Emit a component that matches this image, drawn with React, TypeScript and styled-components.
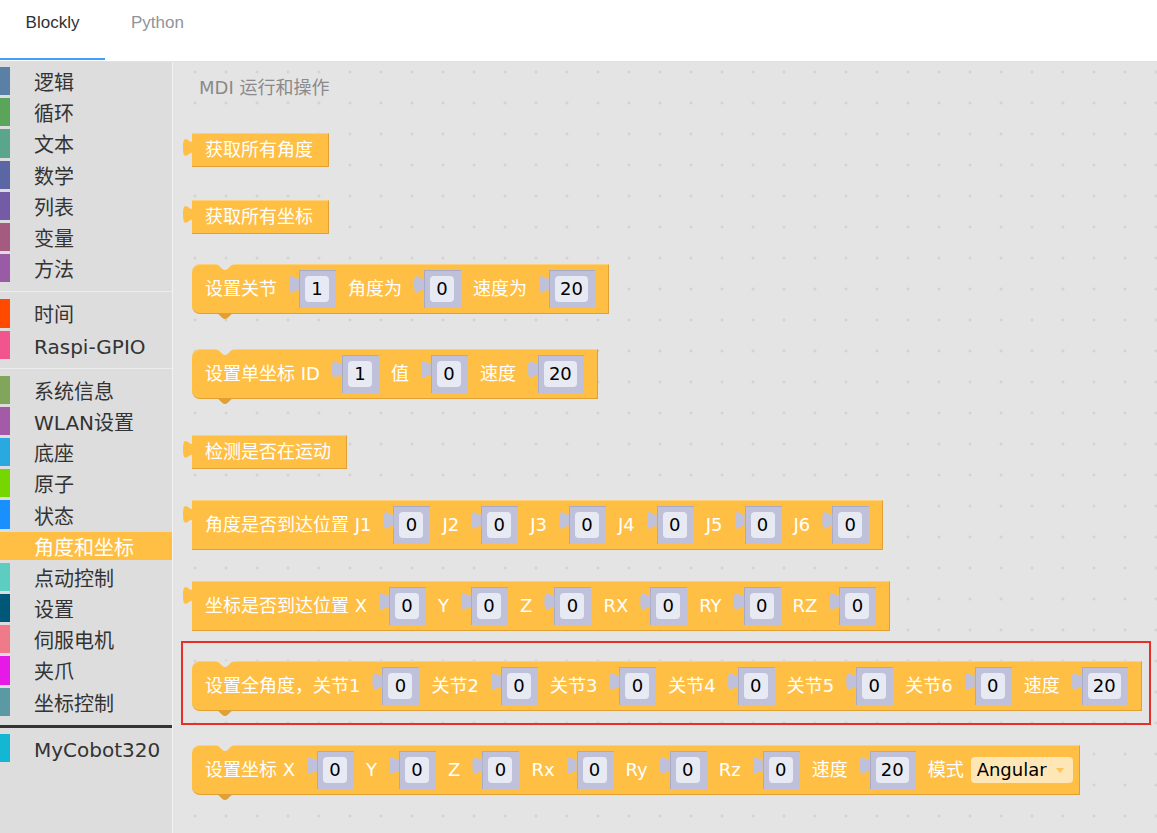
import React from "react";
import styled, { createGlobalStyle } from "styled-components";

const UI = `"DejaVu Sans", "Noto Sans CJK SC", sans-serif`;
const BLOCK = "#FFBF44";
const BLOCK_DARK = "#E0A034";
const BLOCK_LIGHT = "#FFD07A";
const SOCKET = "#BEC1D9";
const FIELD = "#E8EAF3";
const WS_BG = "#E4E4E4";

// puzzle tab (output / input connector), scaled blockly shape
const TAB = "path('M10,0 C10,12.5 0,-10 0,9.4 C0,28.75 10,6.25 10,18.75 Z')";
// statement notch / next tab
const NOTCH = "path('M0,0 C5,0 6,6 10,6 C14,6 15,0 20,0 Z')";

type Part = { t: "text" | "in" | "dd"; v: string };
const T = (v: string): Part => ({ t: "text", v });
const I = (v: string): Part => ({ t: "in", v });
const D = (v: string): Part => ({ t: "dd", v });

type BlockDef = {
  kind: "value" | "statement";
  top: number;
  framed?: boolean;
  parts: Part[];
};

const blocks: BlockDef[] = [
  { kind: "value", top: 33, parts: [T("获取所有角度")] },
  { kind: "value", top: 33, parts: [T("获取所有坐标")] },
  {
    kind: "statement",
    top: 30,
    parts: [T("设置关节"), I("1"), T("角度为"), I("0"), T("速度为"), I("20")],
  },
  {
    kind: "statement",
    top: 35,
    parts: [T("设置单坐标 ID"), I("1"), T("值"), I("0"), T("速度"), I("20")],
  },
  { kind: "value", top: 36, parts: [T("检测是否在运动")] },
  {
    kind: "value",
    top: 31,
    parts: [
      T("角度是否到达位置 J1"), I("0"), T("J2"), I("0"), T("J3"), I("0"),
      T("J4"), I("0"), T("J5"), I("0"), T("J6"), I("0"),
    ],
  },
  {
    kind: "value",
    top: 31,
    parts: [
      T("坐标是否到达位置 X"), I("0"), T("Y"), I("0"), T("Z"), I("0"),
      T("RX"), I("0"), T("RY"), I("0"), T("RZ"), I("0"),
    ],
  },
  {
    kind: "statement",
    top: 10,
    framed: true,
    parts: [
      T("设置全角度，关节1"), I("0"), T("关节2"), I("0"), T("关节3"), I("0"),
      T("关节4"), I("0"), T("关节5"), I("0"), T("关节6"), I("0"), T("速度"), I("20"),
    ],
  },
  {
    kind: "statement",
    top: 20,
    parts: [
      T("设置坐标 X"), I("0"), T("Y"), I("0"), T("Z"), I("0"), T("Rx"), I("0"),
      T("Ry"), I("0"), T("Rz"), I("0"), T("速度"), I("20"), T("模式"), D("Angular"),
    ],
  },
];

type Cat = { label: string; color: string; active?: boolean };
const groups: { items: Cat[]; dark?: boolean }[] = [
  {
    items: [
      { label: "逻辑", color: "#5B80A5" },
      { label: "循环", color: "#5BA55B" },
      { label: "文本", color: "#5BA58C" },
      { label: "数学", color: "#5B67A5" },
      { label: "列表", color: "#745BA5" },
      { label: "变量", color: "#A55B80" },
      { label: "方法", color: "#995BA5" },
    ],
  },
  {
    items: [
      { label: "时间", color: "#FF4A00" },
      { label: "Raspi-GPIO", color: "#F2558E" },
    ],
  },
  {
    items: [
      { label: "系统信息", color: "#80A55B" },
      { label: "WLAN设置", color: "#A35AA7" },
      { label: "底座", color: "#2AA9E0" },
      { label: "原子", color: "#76D600" },
      { label: "状态", color: "#1A8FFF" },
      { label: "角度和坐标", color: BLOCK, active: true },
      { label: "点动控制", color: "#5CCDC0" },
      { label: "设置", color: "#005878" },
      { label: "伺服电机", color: "#F07A8A" },
      { label: "夹爪", color: "#E619E6" },
      { label: "坐标控制", color: "#5B9AA5" },
    ],
    dark: true,
  },
  { items: [{ label: "MyCobot320", color: "#14B7D3" }] },
];

const GlobalStyle = createGlobalStyle`
  html, body { margin: 0; padding: 0; background: #fff; }
  body { font-family: ${UI}; }
  #root { height: 100vh; }
`;

const Page = styled.div`
  height: 100vh;
  display: flex;
  flex-direction: column;
  overflow: hidden;
`;

const TabBar = styled.div`
  display: flex;
  align-items: flex-start;
  height: 61px;
  flex-shrink: 0;
  background: #fff;
  border-bottom: 1px solid #e0e0e0;
`;

const Tab = styled.div<{ $active?: boolean }>`
  width: 105px;
  height: 58px;
  text-align: center;
  font-family: "Liberation Sans", Arial, sans-serif;
  font-size: 17px;
  line-height: 45px;
  color: ${(p) => (p.$active ? "#303133" : "#909399")};
  border-bottom: 2px solid ${(p) => (p.$active ? "#409EFF" : "transparent")};
`;

const Main = styled.div`
  flex: 1;
  display: flex;
  min-height: 0;
`;

const Sidebar = styled.div`
  width: 172px;
  flex-shrink: 0;
  display: flex;
  flex-direction: column;
  padding-top: 5px;
  background: #dddddd;
  border-right: 1px solid #f2f2f2;
`;

const Row = styled.div<{ $active?: boolean; $color: string }>`
  display: flex;
  align-items: center;
  flex-shrink: 0;
  height: 28.2px;
  margin-bottom: 3px;
  background: ${(p) => (p.$active ? p.$color : "transparent")};
  color: ${(p) => (p.$active ? "#fff" : "#333")};
  font-size: 20px;
  white-space: nowrap;

  &::before {
    content: "";
    width: 10px;
    align-self: stretch;
    background: ${(p) => p.$color};
  }
`;

const RowLabel = styled.span`
  margin-left: 24px;
  padding-top: 4px;
  line-height: 1;
`;

const Separator = styled.div<{ $dark?: boolean }>`
  flex-shrink: 0;
  height: ${(p) => (p.$dark ? 3 : 1)}px;
  margin: ${(p) => (p.$dark ? "6px 0 6px" : "6px 0 7px")};
  background: ${(p) => (p.$dark ? "#333" : "#ececec")};
`;

const Workspace = styled.div`
  flex: 1;
  display: flex;
  flex-direction: column;
  align-items: flex-start;
  overflow: hidden;
  background-color: ${WS_BG};
  background-image: radial-gradient(circle, #cdcdcd 1px, transparent 1.4px);
  background-size: 31px 31px;
  background-position: 6.5px -5.5px;
`;

const Title = styled.div`
  margin: 14px 0 0 26px;
  font-size: 18px;
  line-height: 24px;
  color: #8a8a8a;
`;

const Block = styled.div<{ $kind: "value" | "statement"; $simple: boolean; $mt: number }>`
  position: relative;
  display: flex;
  align-items: center;
  gap: 12px;
  width: max-content;
  box-sizing: border-box;
  height: ${(p) => (p.$simple ? 34 : 50)}px;
  margin: ${(p) => p.$mt}px 0 0 19px;
  padding: 0 ${(p) => (p.$simple ? 15 : 13)}px 0 13px;
  background: ${BLOCK};
  border-top: 1px solid ${BLOCK_LIGHT};
  border-right: 1px solid ${BLOCK_DARK};
  border-bottom: 1px solid ${BLOCK_DARK};
  border-radius: ${(p) => (p.$kind === "statement" ? "8px 0 0 8px" : "0")};
  white-space: nowrap;

  &::before {
    content: "";
    position: absolute;
    ${(p) =>
      p.$kind === "value"
        ? `left: -9px; top: 4px; width: 10px; height: 19px; background: ${BLOCK}; clip-path: ${TAB};`
        : `left: 23px; top: -1px; width: 20px; height: 6px; background: ${WS_BG}; clip-path: ${NOTCH};`}
  }

  &::after {
    content: "";
    position: absolute;
    display: ${(p) => (p.$kind === "statement" ? "block" : "none")};
    left: 23px;
    top: 100%;
    width: 20px;
    height: 6px;
    background: ${BLOCK_DARK};
    clip-path: ${NOTCH};
  }
`;

const BlockTab = styled.span`
  position: absolute;
  left: 23px;
  top: 100%;
  margin-top: -1px;
  width: 20px;
  height: 6px;
  background: ${BLOCK};
  clip-path: ${NOTCH};
`;

const BlockText = styled.span`
  color: #fff;
  font-size: 18px;
  line-height: 1;
`;

const Socket = styled.span`
  position: relative;
  display: flex;
  align-items: center;
  height: 38px;
  margin-left: 10px;
  padding: 0 7px 0 6px;
  box-sizing: border-box;
  background: ${SOCKET};
  box-shadow: inset 1px 1px 0 #a9abc4;

  &::before {
    content: "";
    position: absolute;
    left: -10px;
    top: 5px;
    width: 11px;
    height: 19px;
    background: ${SOCKET};
    clip-path: ${TAB};
  }
`;

const Field = styled.span`
  min-width: 24px;
  height: 26px;
  padding: 0 5px;
  box-sizing: border-box;
  border-radius: 4px;
  background: ${FIELD};
  color: #000;
  font-size: 18px;
  line-height: 26px;
  text-align: center;
`;

const Dropdown = styled.span`
  display: flex;
  align-items: center;
  gap: 9px;
  height: 26px;
  margin: 0 -7px 0 -5px;
  padding: 0 9px 0 6px;
  border-radius: 4px;
  background: #ffe6b6;
  color: #000;
  font-size: 18px;
  line-height: 26px;
`;

const Caret = styled.span`
  width: 0;
  height: 0;
  border-left: 4px solid transparent;
  border-right: 4px solid transparent;
  border-top: 5px solid #ffc453;
`;

const Frame = styled.div`
  width: 970px;
  box-sizing: border-box;
  margin: 10px 0 0 8px;
  padding: 18px 0 12px 9px;
  border: 2px solid #e8302a;

  & > ${Block} {
    margin: 0;
  }
`;

function BlockView({ def }: { def: BlockDef }) {
  const simple = def.parts.every((p) => p.t === "text");
  return (
    <Block $kind={def.kind} $simple={simple} $mt={def.top}>
      {def.parts.map((p, i) => {
        if (p.t === "text") return <BlockText key={i}>{p.v}</BlockText>;
        if (p.t === "in")
          return (
            <Socket key={i}>
              <Field>{p.v}</Field>
            </Socket>
          );
        return (
          <Dropdown key={i}>
            {p.v}
            <Caret />
          </Dropdown>
        );
      })}
      {def.kind === "statement" && <BlockTab />}
    </Block>
  );
}

export default function App() {
  return (
    <Page>
      <GlobalStyle />
      <TabBar>
        <Tab $active>Blockly</Tab>
        <Tab>Python</Tab>
      </TabBar>
      <Main>
        <Sidebar>
          {groups.map((g, gi) => (
            <React.Fragment key={gi}>
              {g.items.map((c) => (
                <Row key={c.label} $color={c.color} $active={c.active}>
                  <RowLabel>{c.label}</RowLabel>
                </Row>
              ))}
              {gi < groups.length - 1 && <Separator $dark={g.dark} />}
            </React.Fragment>
          ))}
        </Sidebar>
        <Workspace>
          <Title>MDI 运行和操作</Title>
          {blocks.map((b, i) =>
            b.framed ? (
              <Frame key={i}>
                <BlockView def={b} />
              </Frame>
            ) : (
              <BlockView key={i} def={b} />
            )
          )}
        </Workspace>
      </Main>
    </Page>
  );
}
